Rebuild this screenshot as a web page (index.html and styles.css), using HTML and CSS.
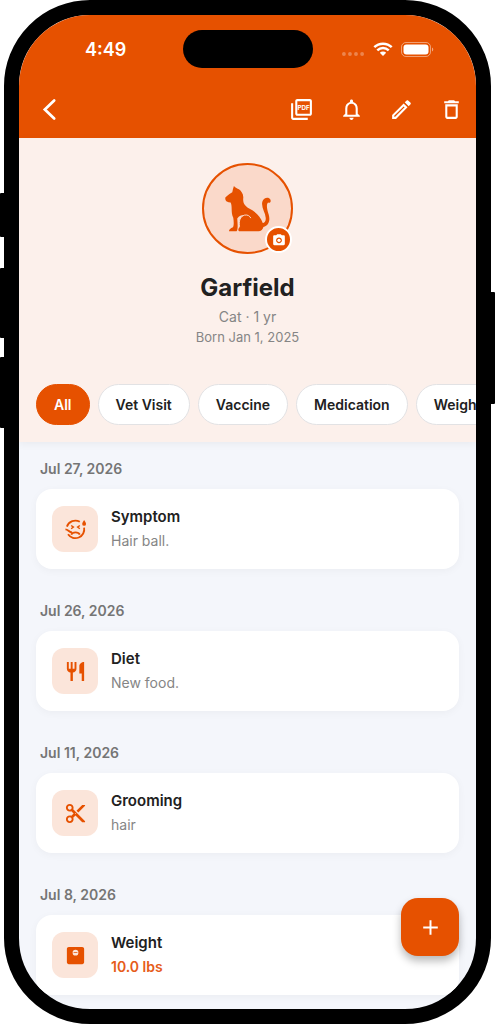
FILE: index.html
```html
<!DOCTYPE html>
<html lang="en">
<head>
<meta charset="utf-8">
<meta name="viewport" content="width=device-width, initial-scale=1">
<title>Garfield</title>
<link rel="stylesheet" href="styles.css">
</head>
<body>
<div class="device">
  <span class="key key-action"></span>
  <span class="key key-up"></span>
  <span class="key key-down"></span>
  <span class="key key-power"></span>
  <div class="screen">
    <header class="topbar">
      <div class="status">
        <span class="time">4:49</span>
        <span class="island"></span>
        <span class="indicators">
          <svg class="signal" viewBox="0 0 24 4"><circle cx="2" cy="2" r="2"/><circle cx="8.300" cy="2" r="2"/><circle cx="14.600" cy="2" r="2"/><circle cx="21" cy="2" r="2"/></svg>
          <svg class="wifi" viewBox="0 0 20 14"><path d="M1.300 5.200a12.500 12.500 0 0 1 17.400 0M4.300 8.300a8.200 8.200 0 0 1 11.400 0" fill="none" stroke="currentColor" stroke-width="2.500"/><path d="M10 14l-3.200-3.300a4.600 4.600 0 0 1 6.400 0z" fill="currentColor"/></svg>
          <svg class="battery" viewBox="0 0 33 15"><rect x=".5" y=".5" width="29" height="14" rx="4.500" fill="none" stroke="currentColor" opacity=".45"/><rect x="2.500" y="2.500" width="25" height="10" rx="3" fill="currentColor"/><path d="M31 5.500v4c1.700-.7 1.700-3.300 0-4z" fill="currentColor" opacity=".5"/></svg>
        </span>
      </div>
      <nav class="toolbar">
        <button class="tool tool-back" aria-label="Back"><svg class="icon" viewBox="0 0 24 24"><path d="M16.500 3.300L7.500 12l9 8.700" fill="none" stroke="currentColor" stroke-width="2.600" stroke-linecap="round"/></svg></button>
        <button class="tool" aria-label="Export PDF"><svg class="icon" viewBox="0 0 24 24"><path d="M20 2H8c-1.100 0-2 .9-2 2v12c0 1.100.9 2 2 2h12c1.100 0 2-.9 2-2V4c0-1.100-.9-2-2-2zm0 14H8V4h12v12zM4 6H2v14c0 1.100.9 2 2 2h14v-2H4V6z"/><text class="icon-label" x="14" y="12.500" text-anchor="middle">PDF</text></svg></button>
        <button class="tool" aria-label="Reminders"><svg class="icon" viewBox="0 0 24 24"><path d="M12 22c1.100 0 2-.9 2-2h-4c0 1.100.9 2 2 2zm6-6v-5c0-3.070-1.630-5.640-4.500-6.320V4c0-.83-.67-1.500-1.500-1.500s-1.500.67-1.500 1.500v.68C7.640 5.360 6 7.920 6 11v5l-2 2v1h16v-1l-2-2zm-2 1H8v-6c0-2.480 1.510-4.500 4-4.500s4 2.020 4 4.500v6z"/></svg></button>
        <button class="tool" aria-label="Edit"><svg class="icon" viewBox="0 0 24 24"><path d="M14.060 9.020l.92.92L5.920 19H5v-.92l9.060-9.060M17.660 3c-.25 0-.51.1-.7.29l-1.830 1.830 3.750 3.750 1.830-1.830c.39-.39.39-1.020 0-1.410l-2.340-2.340c-.2-.2-.45-.29-.71-.29zm-3.600 3.190L3 17.250V21h3.750L17.810 9.940l-3.750-3.750z"/></svg></button>
        <button class="tool" aria-label="Delete"><svg class="icon" viewBox="0 0 24 24"><path d="M6 19c0 1.100.9 2 2 2h8c1.100 0 2-.9 2-2V7H6v12zM8 9h8v10H8V9zm7.500-5l-1-1h-5l-1 1H5v2h14V4z"/></svg></button>
      </nav>
    </header>

    <section class="profile">
      <div class="avatar">
        <svg class="cat" viewBox="130 105 145 143"><path d="M160 107Q156 118 155 126Q146 131 139 137L134 142Q133 149 137 153Q144 157 150 157C156 168 150 188 158 203C160 216 160 227 157 232C150 235 145 239 145 244H168C173 240 171 218 170 205C177 197 184 194 192 195C178 200 174 215 177 232C172 236 172 244 177 244H234C242 244 248 237 249 231C266 226 270 210 265 193C260 177 257 164 263 157C269 160 273 155 270 148C265 138 249 142 246 154C241 171 255 187 256 203C257 212 253 218 247 219C241 199 226 185 206 175C194 168 187 160 188 145C190 132 182 122 175 117C170 114 165 113 160 107Z"/><path class="cat-line" d="M177 230C174 212 179 199 192 195C202 193 208 198 211 204"/></svg>
        <button class="camera" aria-label="Change photo"><svg viewBox="0 0 24 24"><circle cx="12" cy="12.500" r="2.800"/><path d="M9 2L7.170 4H4c-1.100 0-2 .9-2 2v13c0 1.100.9 2 2 2h16c1.100 0 2-.9 2-2V6c0-1.100-.9-2-2-2h-3.170L15 2H9zm3 15.500c-2.760 0-5-2.240-5-5s2.240-5 5-5 5 2.240 5 5-2.240 5-5 5z"/></svg></button>
      </div>
      <h1 class="name">Garfield</h1>
      <p class="detail">Cat · 1 yr</p>
      <p class="detail detail-born">Born Jan 1, 2025</p>
      <div class="chips">
        <button class="chip chip-active">All</button>
        <button class="chip">Vet Visit</button>
        <button class="chip">Vaccine</button>
        <button class="chip">Medication</button>
        <button class="chip">Weight</button>
      </div>
    </section>

    <main class="timeline">
      <h2 class="date">Jul 27, 2026</h2>
      <article class="card">
        <span class="tile"><svg viewBox="0 0 24 24"><g fill="none" stroke="currentColor" stroke-width="1.900"><path d="M3 9A9.300 9.300 0 0 1 16.500 4M21 10A9.300 9.300 0 0 1 4.200 17M1.500 11.800C4.500 11.800 5 15 8.500 15M7.500 17.300C9 14.200 15 14.200 16.500 17.300"/><path d="M7.500 7.800l2.300 1.700-2.300 1.700M16.500 7.800l-2.300 1.700 2.300 1.700" stroke-width="1.500"/></g><path d="M21 2c1.200 1.800 2 3 2 4.200a2 2 0 0 1-4 0C19 5 19.800 3.800 21 2z"/></svg></span>
        <div class="entry"><h3 class="title">Symptom</h3><p class="note">Hair ball.</p></div>
      </article>
      <h2 class="date">Jul 26, 2026</h2>
      <article class="card">
        <span class="tile"><svg viewBox="0 0 24 24"><path d="M11 9H9V2H7v7H5V2H3v7c0 2.120 1.660 3.840 3.750 3.970V22h2.500v-9.030C11.340 12.840 13 11.120 13 9V2h-2v7zm5-3v8h2.500v8H21V2c-2.760 0-5 2.240-5 4z"/></svg></span>
        <div class="entry"><h3 class="title">Diet</h3><p class="note">New food.</p></div>
      </article>
      <h2 class="date">Jul 11, 2026</h2>
      <article class="card">
        <span class="tile"><svg viewBox="0 0 24 24"><path d="M9.640 7.640c.23-.5.36-1.050.36-1.640 0-2.210-1.790-4-4-4S2 3.790 2 6s1.790 4 4 4c.59 0 1.140-.13 1.640-.36L10 12l-2.360 2.360C7.140 14.130 6.590 14 6 14c-2.210 0-4 1.790-4 4s1.790 4 4 4 4-1.790 4-4c0-.59-.13-1.140-.36-1.640L12 14l7 7h3v-1L9.640 7.640zM6 8c-1.100 0-2-.89-2-2s.9-2 2-2 2 .89 2 2-.9 2-2 2zm0 12c-1.100 0-2-.89-2-2s.9-2 2-2 2 .89 2 2-.9 2-2 2zm6-7.500c-.28 0-.5-.22-.5-.5s.22-.5.5-.5.5.22.5.5-.22.5-.5.5zM19 3l-6 6 2 2 7-7V3z"/></svg></span>
        <div class="entry"><h3 class="title">Grooming</h3><p class="note">hair</p></div>
      </article>
      <h2 class="date">Jul 8, 2026</h2>
      <article class="card">
        <span class="tile"><svg viewBox="0 0 24 24"><path fill-rule="evenodd" d="M19 3H5c-1.100 0-2 .9-2 2v14c0 1.100.9 2 2 2h14c1.100 0 2-.9 2-2V5c0-1.100-.9-2-2-2zm-7 9a3 3 0 1 1 0-6 3 3 0 0 1 0 6z"/><path d="M10 8.600h4v.9h-4z"/></svg></span>
        <div class="entry"><h3 class="title">Weight</h3><p class="note note-value">10.0 lbs</p></div>
      </article>
    </main>
    <button class="fab" aria-label="Add entry"><svg class="icon" viewBox="0 0 24 24"><path d="M12 5v14M5 12h14" fill="none" stroke="currentColor" stroke-width="1.900"/></svg></button>
  </div>
</div>
</body>
</html>
```
FILE: styles.css
```css
* {
  box-sizing: border-box;
  margin: 0;
}

body {
  background: #fff;
  font-family: Inter, "Liberation Sans", sans-serif;
  color: #212121;
}

button {
  border: 0;
  padding: 0;
  font: inherit;
  color: inherit;
  background: none;
}

svg {
  display: block;
  fill: currentColor;
}

.device {
  position: relative;
  height: 100vh;
  padding: 0 4px;
}

.key {
  position: absolute;
  left: 0;
  width: 8px;
  border-radius: 1px;
  background: #000;
}

.key-action { top: 193px; height: 44px; }
.key-up { top: 268px; height: 70px; }
.key-down { top: 357px; height: 71px; }
.key-power { top: 292px; height: 112px; left: auto; right: 0; }

.screen {
  position: relative;
  display: flex;
  flex-direction: column;
  height: 100%;
  overflow: hidden;
  border: 15px solid #000;
  border-radius: 86px;
  background: #f4f6fb;
}

.topbar {
  flex: none;
  background: #e65100;
  color: #fff;
}

.status {
  display: grid;
  grid-template-columns: 1fr 130px 1fr;
  align-items: center;
  height: 68px;
}

.time {
  padding-left: 66px;
  font-size: 18px;
  font-weight: 600;
}

.island {
  height: 38px;
  border-radius: 19px;
  background: #000;
}

.indicators {
  display: flex;
  align-items: center;
  justify-content: flex-end;
  gap: 8px;
  padding-right: 42px;
}

.signal { width: 23px; height: 4px; margin-top: 10px; opacity: .3; }
.wifi { width: 20px; height: 14px; }
.battery { width: 33px; height: 15px; }

.toolbar {
  display: flex;
  justify-content: flex-end;
  height: 55px;
}

.tool {
  display: grid;
  place-items: center;
  width: 50px;
  height: 52px;
}

.tool-back {
  width: 60px;
  margin-right: auto;
}

.icon {
  width: 25px;
  height: 25px;
}

.icon-label {
  font-size: 6px;
  font-weight: 700;
}

.profile {
  position: relative;
  z-index: 1;
  flex: none;
  display: flex;
  flex-direction: column;
  align-items: center;
  padding-top: 25px;
  background: #fcf0eb;
  box-shadow: 0 2px 8px rgba(0, 0, 0, .05);
}

.avatar {
  position: relative;
  display: grid;
  place-items: center;
  width: 91px;
  height: 91px;
  border: 2px solid #e65100;
  border-radius: 50%;
  background: #fad9ca;
  color: #e65100;
}

.cat {
  width: 48px;
  height: 48px;
}

.cat-line {
  fill: none;
  stroke: #fad9ca;
  stroke-width: 3;
}

.camera {
  position: absolute;
  right: -1px;
  bottom: -1px;
  display: grid;
  place-items: center;
  width: 27px;
  height: 27px;
  border: 2px solid #fff;
  border-radius: 50%;
  background: #e65100;
  color: #fff;
}

.camera svg {
  width: 14px;
  height: 14px;
}

.name {
  margin: 19px 0 3px;
  font-size: 24px;
  font-weight: 700;
  line-height: 30px;
}

.detail {
  font-size: 14px;
  line-height: 21px;
  color: #858585;
}

.detail-born {
  font-size: 13px;
}

.chips {
  display: flex;
  gap: 8px;
  align-self: stretch;
  margin-top: 36px;
  padding: 0 17px 17px;
  overflow: hidden;
}

.chip {
  flex: none;
  height: 41px;
  padding: 0 17px;
  border: 1px solid #e2e2e4;
  border-radius: 21px;
  background: #fff;
  font-size: 14px;
  font-weight: 600;
}

.chip-active {
  border-color: #e65100;
  background: #e65100;
  color: #fff;
}

.timeline {
  flex: 1;
  min-height: 0;
  padding: 17px 17px 0;
  overflow: hidden;
}

.date {
  margin-bottom: 10px;
  padding-left: 4px;
  font-size: 14px;
  font-weight: 600;
  line-height: 20px;
  color: #757575;
}

.card {
  display: flex;
  align-items: center;
  gap: 13px;
  height: 80px;
  margin-bottom: 32px;
  padding: 0 16px;
  border-radius: 16px;
  background: #fff;
  box-shadow: 0 2px 8px rgba(0, 0, 0, .04);
}

.tile {
  display: grid;
  place-items: center;
  width: 46px;
  height: 46px;
  border-radius: 12px;
  background: #fbe5da;
  color: #e65100;
}

.tile svg {
  width: 23px;
  height: 23px;
}

.title {
  font-size: 15px;
  font-weight: 600;
  line-height: 24px;
}

.note {
  font-size: 14px;
  line-height: 24px;
  color: #858585;
}

.note-value {
  font-weight: 600;
  color: #e65c1a;
}

.fab {
  position: absolute;
  right: 17px;
  bottom: 53px;
  display: grid;
  place-items: center;
  width: 58px;
  height: 58px;
  border-radius: 17px;
  background: #e65100;
  color: #fff;
  box-shadow: 0 5px 8px rgba(0, 0, 0, .28);
  z-index: 2;
}
```
